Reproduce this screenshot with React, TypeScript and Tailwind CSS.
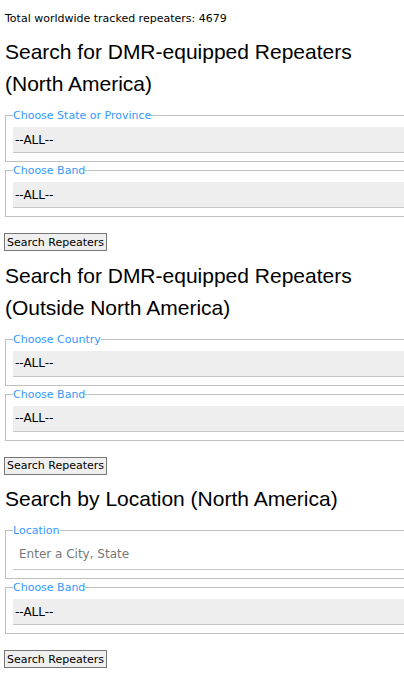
import React from 'react'

// ─── Pieces ────────────────────────────────────────────────

const smallFont = "font-['DejaVu_Sans',Verdana,sans-serif]"

function SelectBox({ label, value }: { label: string; value: string }) {
  return (
    <fieldset className="mb-[2px] w-[420px] border border-[#c0c0c0] pl-[7px] pb-2">
      <legend className={`${smallFont} text-[11px] leading-[13px] text-[#3399ff]`}>{label}</legend>
      <div
        className={`${smallFont} mt-[5px] flex h-[26px] items-center border-b border-[#c8c8c8] bg-[#eeeeee] pl-[2px] text-[12px] text-black`}
      >
        {value}
      </div>
    </fieldset>
  )
}

function TextBox({ label, placeholder }: { label: string; placeholder: string }) {
  return (
    <fieldset className="mb-[2px] w-[420px] border border-[#c0c0c0] pl-[7px] pb-2">
      <legend className={`${smallFont} text-[11px] leading-[13px] text-[#3399ff]`}>{label}</legend>
      <input
        placeholder={placeholder}
        className={`${smallFont} mt-[1px] block h-[32px] w-full border-b border-[#c8c8c8] bg-white pl-[6px] text-[12px] outline-none placeholder:text-[#777777]`}
      />
    </fieldset>
  )
}

function SearchButton() {
  return (
    <button
      className={`${smallFont} ml-[4px] mt-[14px] h-[18px] border border-[#767676] bg-[#efefef] px-[2px] text-[11px] leading-none text-black`}
    >
      Search Repeaters
    </button>
  )
}

function Heading({ children }: { children: React.ReactNode }) {
  return (
    <h2 className="mb-[9px] font-['Liberation_Sans',Arial,sans-serif] text-[21px] leading-[32px] text-black">
      {children}
    </h2>
  )
}

// ─── Page ──────────────────────────────────────────────────

export default function App() {
  return (
    <div className="min-h-screen w-[404px] overflow-hidden bg-white">
      <div className="pl-[5px] pt-[12px]">
        <p className={`${smallFont} mb-[10px] text-[11px] leading-[14px] text-black`}>
          Total worldwide tracked repeaters: 4679
        </p>

        {/* North America */}
        <Heading>
          Search for DMR-equipped Repeaters
          <br />
          (North America)
        </Heading>
        <SelectBox label="Choose State or Province" value="--ALL--" />
        <SelectBox label="Choose Band" value="--ALL--" />
      </div>
      <SearchButton />

      {/* Outside North America */}
      <div className="pl-[5px] pt-[8px]">
        <Heading>
          Search for DMR-equipped Repeaters
          <br />
          (Outside North America)
        </Heading>
        <SelectBox label="Choose Country" value="--ALL--" />
        <SelectBox label="Choose Band" value="--ALL--" />
      </div>
      <SearchButton />

      {/* By location */}
      <div className="pl-[5px] pt-[8px]">
        <Heading>Search by Location (North America)</Heading>
        <TextBox label="Location" placeholder="Enter a City, State" />
        <SelectBox label="Choose Band" value="--ALL--" />
      </div>
      <SearchButton />
    </div>
  )
}
